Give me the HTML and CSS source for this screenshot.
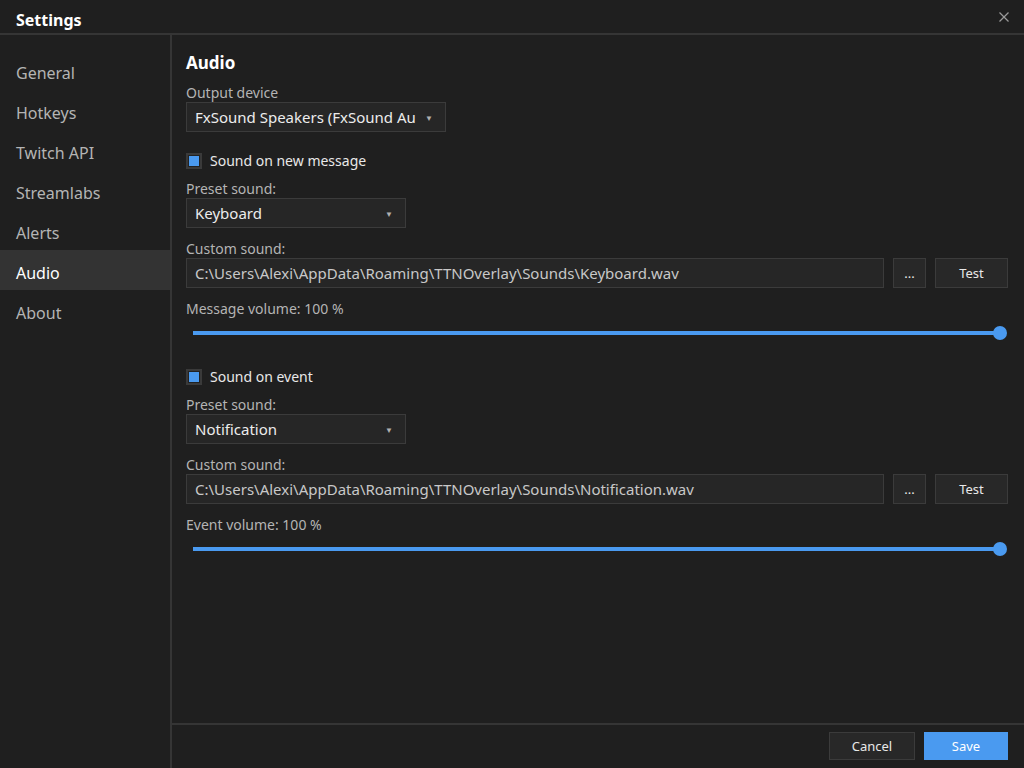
FILE: index.html
```html
<!DOCTYPE html>
<html lang="en">
<head>
    <meta charset="utf-8">
    <title>Settings</title>
    <link rel="stylesheet" href="styles.css">
</head>
<body>
    <div class="window">
        <header class="title-bar">
            <span class="title">Settings</span>
            <svg class="close" width="12" height="12" viewBox="0 0 12 12" fill="none" stroke="currentColor" stroke-width="1.3">
                <line x1="1.5" y1="1.5" x2="10.5" y2="10.5"></line>
                <line x1="10.5" y1="1.5" x2="1.5" y2="10.5"></line>
            </svg>
        </header>

        <div class="body">
            <nav class="sidebar">
                <div class="nav-item">General</div>
                <div class="nav-item">Hotkeys</div>
                <div class="nav-item">Twitch API</div>
                <div class="nav-item">Streamlabs</div>
                <div class="nav-item">Alerts</div>
                <div class="nav-item active">Audio</div>
                <div class="nav-item">About</div>
            </nav>

            <div class="panel">
                <main class="content">
                    <h2>Audio</h2>

                    <label class="field-label">Output device</label>
                    <div class="select select-wide">
                        <span class="select-text">FxSound Speakers (FxSound Au</span>
                        <span class="caret">▼</span>
                    </div>

                    <!-- new message -->
                    <div class="checkbox-row">
                        <span class="checkbox"><span class="check-fill"></span></span>
                        Sound on new message
                    </div>
                    <label class="field-label">Preset sound:</label>
                    <div class="select">
                        <span class="select-text">Keyboard</span>
                        <span class="caret">▼</span>
                    </div>
                    <label class="field-label spaced">Custom sound:</label>
                    <div class="file-row">
                        <div class="textbox">C:\Users\Alexi\AppData\Roaming\TTNOverlay\Sounds\Keyboard.wav</div>
                        <button class="btn btn-dots">...</button>
                        <button class="btn btn-test">Test</button>
                    </div>
                    <label class="field-label spaced">Message volume: 100 %</label>
                    <div class="slider">
                        <div class="track"></div>
                        <div class="thumb"></div>
                    </div>

                    <!-- event -->
                    <div class="checkbox-row second">
                        <span class="checkbox"><span class="check-fill"></span></span>
                        Sound on event
                    </div>
                    <label class="field-label">Preset sound:</label>
                    <div class="select">
                        <span class="select-text">Notification</span>
                        <span class="caret">▼</span>
                    </div>
                    <label class="field-label spaced">Custom sound:</label>
                    <div class="file-row">
                        <div class="textbox">C:\Users\Alexi\AppData\Roaming\TTNOverlay\Sounds\Notification.wav</div>
                        <button class="btn btn-dots">...</button>
                        <button class="btn btn-test">Test</button>
                    </div>
                    <label class="field-label spaced">Event volume: 100 %</label>
                    <div class="slider">
                        <div class="track"></div>
                        <div class="thumb"></div>
                    </div>
                </main>

                <footer class="footer">
                    <button class="btn btn-cancel">Cancel</button>
                    <button class="btn btn-save">Save</button>
                </footer>
            </div>
        </div>
    </div>
</body>
</html>
```

FILE: styles.css
```css
:root {
    --bg: #1f1f1f;
    --line: #353535;
    --text: #e6e6e6;
    --text-dim: #b4b4b4;
    --control-bg: #262626;
    --control-border: #3b3b3b;
    --accent: #4a9af0;
    --active-bg: #333333;
}

* {
    box-sizing: border-box;
}

html, body {
    margin: 0;
    height: 100%;
}

body {
    font-family: "Noto Sans", "Open Sans", sans-serif;
    background: var(--bg);
    color: var(--text);
    font-size: 15px;
}

.window {
    height: 768px;
    display: flex;
    flex-direction: column;
}

.title-bar {
    height: 35px;
    flex: none;
    display: flex;
    align-items: center;
    justify-content: space-between;
    padding: 0 14px 0 16px;
    border-bottom: 2px solid var(--line);
}

.title {
    font-weight: 700;
    font-size: 16px;
    color: #ffffff;
    margin-top: 6px;
}

.close {
    color: #9a9a9a;
    margin-top: 1px;
}

.body {
    flex: 1;
    display: flex;
    min-height: 0;
}

.sidebar {
    width: 172px;
    flex: none;
    border-right: 2px solid var(--line);
    padding-top: 15px;
}

.nav-item {
    height: 40px;
    line-height: 34px;
    padding: 6px 0 0 16px;
    font-size: 16px;
    color: var(--text-dim);
}

.nav-item.active {
    background: var(--active-bg);
    color: #ffffff;
}

.panel {
    flex: 1;
    display: flex;
    flex-direction: column;
}

.content {
    flex: 1;
    padding: 16px 16px 0 14px;
}

h2 {
    margin: 0 0 7px;
    font-size: 17px;
    font-weight: 700;
    color: #ffffff;
    line-height: 24px;
}

.field-label {
    display: block;
    font-size: 14px;
    color: var(--text-dim);
    line-height: 19px;
    padding-top: 1px;
}

.field-label.spaced {
    margin-top: 10px;
}

.select {
    width: 220px;
    height: 30px;
    background: var(--control-bg);
    border: 1px solid var(--control-border);
    display: flex;
    align-items: center;
    justify-content: space-between;
    padding: 0 12px 0 8px;
    font-size: 15px;
    color: #ececec;
}

.select-wide {
    width: 260px;
}

.select-text {
    white-space: nowrap;
    overflow: hidden;
}

.caret {
    font-size: 8px;
    color: #b0b0b0;
    margin-left: 8px;
}

.checkbox-row {
    display: flex;
    align-items: center;
    gap: 8px;
    margin: 19px 0 7px;
    font-size: 14px;
    color: #e8e8e8;
    line-height: 20px;
}

.checkbox-row.second {
    margin-top: 19px;
}

.checkbox {
    width: 16px;
    height: 16px;
    border: 2px solid #3a3a3a;
    background: #222;
    display: flex;
    align-items: center;
    justify-content: center;
}

.check-fill {
    width: 10px;
    height: 10px;
    background: var(--accent);
}

.file-row {
    display: flex;
    gap: 9px;
}

.textbox {
    flex: 1;
    height: 30px;
    line-height: 29px;
    background: var(--control-bg);
    border: 1px solid var(--control-border);
    padding: 0 8px;
    font-size: 15px;
    color: #c8c8c8;
    white-space: nowrap;
    overflow: hidden;
}

.btn {
    font-family: inherit;
    background: #282828;
    border: 1px solid var(--control-border);
    color: #e8e8e8;
    font-size: 13px;
    padding: 0;
}

.btn-dots {
    width: 33px;
    height: 30px;
    line-height: 20px;
}

.btn-test {
    width: 73px;
    height: 30px;
}

.slider {
    position: relative;
    height: 30px;
    margin: 0 0 0 7px;
}

.track {
    position: absolute;
    left: 0;
    right: 8px;
    top: 13px;
    height: 4px;
    background: var(--accent);
}

.thumb {
    position: absolute;
    right: 1px;
    top: 8px;
    width: 14px;
    height: 14px;
    border-radius: 50%;
    background: var(--accent);
}

.footer {
    height: 45px;
    flex: none;
    border-top: 2px solid var(--line);
    display: flex;
    justify-content: flex-end;
    align-items: center;
    gap: 9px;
    padding: 0 16px 2px 0;
}

.btn-cancel {
    width: 86px;
    height: 28px;
}

.btn-save {
    width: 84px;
    height: 28px;
    background: var(--accent);
    border-color: var(--accent);
    color: #ffffff;
}
```
